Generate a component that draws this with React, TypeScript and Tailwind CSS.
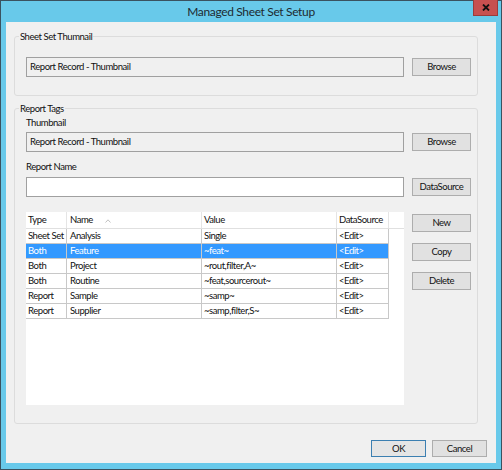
import React from 'react';

const font = { fontFamily: 'Lato, "Noto Sans", sans-serif' };

interface Row {
  type: string;
  name: string;
  value: string;
  selected?: boolean;
}

const rows: Row[] = [
  { type: 'Sheet Set', name: 'Analysis', value: 'Single' },
  { type: 'Both', name: 'Feature', value: '~feat~', selected: true },
  { type: 'Both', name: 'Project', value: '~rout,filter,A~' },
  { type: 'Both', name: 'Routine', value: '~feat,sourcerout~' },
  { type: 'Report', name: 'Sample', value: '~samp~' },
  { type: 'Report', name: 'Supplier', value: '~samp,filter,S~' },
];

function Button({ label, className = '' }: { label: string; className?: string }) {
  return (
    <button
      className={`flex items-center justify-center bg-[#e1e1e1] border border-[#adadad] text-[9.5px] leading-none text-[#111] ${className}`}
    >
      {label}
    </button>
  );
}

function GroupBox({ title, className = '', children }: { title: string; className?: string; children: React.ReactNode }) {
  return (
    <div className={`relative w-[464px] border border-[#dcdcdc] rounded-[3px] ${className}`}>
      {/* caption sits on top of the frame line */}
      <span className="absolute -top-[7px] left-[4px] px-[1px] bg-[#f0f0f0] text-[9.5px] leading-[13px] text-[#111]">
        {title}
      </span>
      {children}
    </div>
  );
}

function ReportList() {
  const cols = 'grid grid-cols-[41px_135px_135px_52px]';
  return (
    <div className="w-[378px] h-[193px] bg-white text-[9.5px] leading-[14px] text-[#111]">
      <div className="h-[17px] border-b border-[#e0e0e0]">
        <div className={`${cols} h-[16px]`}>
          <div className="pl-[2px] pt-[1px] border-r border-[#e5e5e5]">Type</div>
          <div className="relative pl-[3px] pt-[1px] border-r border-[#e5e5e5]">
            Name
            <svg className="absolute left-[38px] top-[7px]" width="6" height="4" viewBox="0 0 6 4">
              <path d="M0.5 3.5 L3 0.8 L5.5 3.5" fill="none" stroke="#c0c0c0" strokeWidth="1" />
            </svg>
          </div>
          <div className="pl-[2px] pt-[1px] border-r border-[#e5e5e5]">Value</div>
          <div className="pl-[2px] pt-[1px] border-r border-[#e5e5e5]">DataSource</div>
        </div>
      </div>
      {rows.map((r) => (
        <div
          key={r.name}
          className={`${cols} w-[363px] h-[15px] border-b border-[#c8c8c8] ${r.selected ? 'bg-[#3399ff] text-white' : ''}`}
        >
          <div className="pl-[2px] border-r border-[#c8c8c8] whitespace-nowrap">{r.type}</div>
          <div className="pl-[3px] border-r border-[#c8c8c8]">{r.name}</div>
          <div className="pl-[2px] border-r border-[#c8c8c8]">{r.value}</div>
          <div className="pl-[2px] border-r border-[#c8c8c8]">&lt;Edit&gt;</div>
        </div>
      ))}
    </div>
  );
}

export default function App() {
  return (
    <div
      style={font}
      className="w-[502px] h-[470px] flex flex-col bg-[#68c9ea] border border-[#3a5260] tracking-[-0.45px]"
    >
      {/* title bar */}
      <div className="relative h-[21px] flex items-center justify-center">
        <span className="text-[12px] leading-none tracking-[-0.35px] text-[#1e2a30] mt-[1px]">
          Managed Sheet Set Setup
        </span>
        <div className="absolute right-[3px] -top-[1px] w-[25px] h-[16px] bg-[#c75050] border border-[#9b3b3b] border-t-0 flex items-center justify-center">
          <svg width="8" height="7" viewBox="0 0 8 7">
            <path d="M1 0.5 L7 6.5 M7 0.5 L1 6.5" stroke="#111" strokeWidth="1.8" />
          </svg>
        </div>
      </div>

      {/* client area */}
      <div className="mx-[5px] h-[441px] bg-[#f0f0f0] flex flex-col pl-[8px] pt-[14px]">
        <GroupBox title="Sheet Set Thumnail" className="h-[60px]">
          <div className="flex items-center pl-[11px] pt-[20px]">
            <div className="w-[378px] h-[20px] border border-[#a0a0a0] bg-[#f0f0f0] pl-[3px] pt-[2px] text-[9.5px] leading-[13px] text-[#111]">
              Report Record - Thumbnail
            </div>
            <Button label="Browse" className="ml-[8px] w-[59px] h-[18px]" />
          </div>
        </GroupBox>

        <GroupBox title="Report Tags" className="mt-[12px] h-[316px]">
          <div className="flex flex-col pl-[11px] pt-[7px]">
            <div className="text-[9.5px] leading-[13px] text-[#111]">Thumbnail</div>
            <div className="flex items-center mt-[3px]">
              <div className="w-[378px] h-[20px] border border-[#a0a0a0] bg-[#f0f0f0] pl-[3px] pt-[2px] text-[9.5px] leading-[13px] text-[#111]">
                Report Record - Thumbnail
              </div>
              <Button label="Browse" className="ml-[8px] w-[59px] h-[18px]" />
            </div>

            <div className="mt-[8px] text-[9.5px] leading-[13px] text-[#111]">Report Name</div>
            <div className="flex items-center mt-[4px]">
              <div className="w-[378px] h-[20px] border border-[#a0a0a0] bg-white" />
              <Button label="DataSource" className="ml-[8px] w-[59px] h-[18px]" />
            </div>

            <div className="flex mt-[15px]">
              <ReportList />
              <div className="ml-[8px] pt-[2px] flex flex-col gap-[11px]">
                <Button label="New" className="w-[59px] h-[18px]" />
                <Button label="Copy" className="w-[59px] h-[18px]" />
                <Button label="Delete" className="w-[59px] h-[18px]" />
              </div>
            </div>
          </div>
        </GroupBox>

        <div className="flex justify-end gap-[6px] pr-[9px] mt-[16px]">
          <Button label="OK" className="w-[55px] h-[17px] !bg-[#e5e5e5] !border-[#3c7fb1]" />
          <Button label="Cancel" className="w-[55px] h-[17px]" />
        </div>
      </div>
    </div>
  );
}
